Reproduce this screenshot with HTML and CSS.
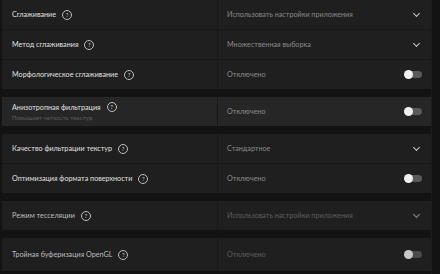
FILE: index.html
```html
<!DOCTYPE html>
<html lang="ru">
<head>
<meta charset="utf-8">
<link rel="stylesheet" href="styles.css">
</head>
<body>
<div class="page">
  <div class="list">
    <div class="group">
      <div class="row">
        <div class="label"><span>Сглаживание</span><span class="help">?</span></div>
        <div class="value"><span>Использовать настройки приложения</span><span class="chev"></span></div>
      </div>
      <div class="row">
        <div class="label"><span>Метод сглаживания</span><span class="help">?</span></div>
        <div class="value"><span>Множественная выборка</span><span class="chev"></span></div>
      </div>
      <div class="row">
        <div class="label"><span>Морфологическое сглаживание</span><span class="help">?</span></div>
        <div class="value"><span>Отключено</span><span class="toggle"></span></div>
      </div>
    </div>
    <div class="group hi">
      <div class="row">
        <div class="label two"><div class="line"><span>Анизотропная фильтрация</span><span class="help">?</span></div><div class="sub">Повышает четкость текстур</div></div>
        <div class="value"><span>Отключено</span><span class="toggle"></span></div>
      </div>
    </div>
    <div class="group">
      <div class="row">
        <div class="label"><span>Качество фильтрации текстур</span><span class="help">?</span></div>
        <div class="value"><span>Стандартное</span><span class="chev"></span></div>
      </div>
      <div class="row">
        <div class="label"><span>Оптимизация формата поверхности</span><span class="help">?</span></div>
        <div class="value"><span>Отключено</span><span class="toggle"></span></div>
      </div>
    </div>
    <div class="group dim">
      <div class="row">
        <div class="label"><span>Режим тесселяции</span><span class="help">?</span></div>
        <div class="value"><span>Использовать настройки приложения</span><span class="chev"></span></div>
      </div>
    </div>
    <div class="group dim">
      <div class="row tall">
        <div class="label"><span>Тройная буферизация OpenGL</span><span class="help">?</span></div>
        <div class="value"><span>Отключено</span><span class="toggle"></span></div>
      </div>
    </div>
  </div>
  <div class="scroll"></div>
</div>
</body>
</html>
```
FILE: styles.css
```css
html, body {
  margin: 0;
  padding: 0;
  background: #131313;
  width: 440px;
  height: 274px;
  overflow: hidden;
}
.page {
  display: flex;
  height: 274px;
  padding-left: 2px;
  font-family: Lato, "Noto Sans", sans-serif;
  font-size: 7.2px;
}
.list {
  width: 429px;
  display: flex;
  flex-direction: column;
  gap: 8px;
}
.scroll {
  flex: 1;
  border-left: 1px solid #1c1c1c;
}
.group {
  background: #1f1f1f;
  display: flex;
  flex-direction: column;
}
.group.hi { background: #262626; }
.row {
  display: flex;
  height: 29px;
  border-bottom: 1px solid #181818;
}
.row:last-child { border-bottom: none; }
.row.tall { height: 33px; }
.label {
  width: 205px;
  padding-left: 10px;
  display: flex;
  align-items: center;
  gap: 6px;
  color: #e0e0e0;
  border-right: 1px solid #181818;
}
.label.two {
  flex-direction: column;
  align-items: flex-start;
  justify-content: center;
  gap: 2px;
}
.line { display: flex; align-items: center; gap: 6px; }
.sub { font-size: 6.2px; color: #5c5c5c; }
.help {
  width: 8px;
  height: 8px;
  border: 1px solid #bdbdbd;
  border-radius: 50%;
  font-size: 6px;
  line-height: 8px;
  text-align: center;
  color: #cfcfcf;
}
.value {
  flex: 1;
  display: flex;
  align-items: center;
  justify-content: space-between;
  padding-left: 9px;
  padding-right: 9px;
  color: #8a8a8a;
}
.chev {
  width: 4px;
  height: 4px;
  border-right: 1.4px solid #c8c8c8;
  border-bottom: 1.4px solid #c8c8c8;
  transform: rotate(45deg);
  margin-right: 3px;
  margin-top: -3px;
}
.toggle {
  position: relative;
  width: 17px;
  height: 7px;
  border-radius: 4px;
  background: #5a5a5a;
}
.toggle::before {
  content: "";
  position: absolute;
  left: -1px;
  top: -1px;
  width: 9px;
  height: 9px;
  border-radius: 50%;
  background: #f0f0f0;
}
.dim .label { color: #bdbdbd; }
.dim .value { color: #5e5e5e; }
.dim .chev { border-color: #8a8a8a; }
.dim .toggle { background: #4a4a4a; }
.dim .toggle::before { background: #c8c8c8; }
```
